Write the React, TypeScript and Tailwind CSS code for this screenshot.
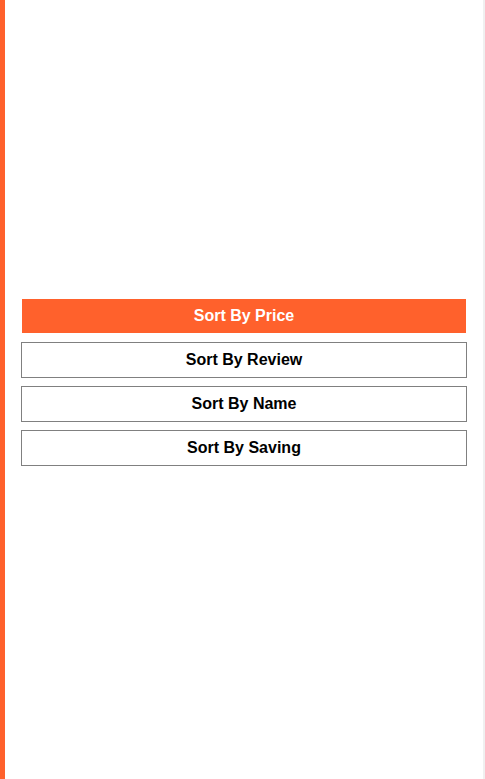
const options = ["Sort By Price", "Sort By Review", "Sort By Name", "Sort By Saving"];

export default function App() {
  const active = 0;

  return (
    <div className="flex h-[779px] w-[485px] bg-white font-['Liberation_Sans',Arial,sans-serif]">
      <div className="w-[5px] shrink-0 bg-[#ff612c]" />
      <div className="flex flex-1 flex-col gap-2 px-4 pt-[298px]">
        {options.map((label, i) => (
          <button
            key={label}
            className={
              i === active
                ? "flex h-9 items-center justify-center border border-white bg-[#ff612c] text-base font-bold text-white"
                : "flex h-9 items-center justify-center border border-[#808080] bg-white text-base font-bold text-black"
            }
          >
            {label}
          </button>
        ))}
      </div>
      <div className="w-[2px] shrink-0 bg-[#f0f0f0]" />
    </div>
  );
}
